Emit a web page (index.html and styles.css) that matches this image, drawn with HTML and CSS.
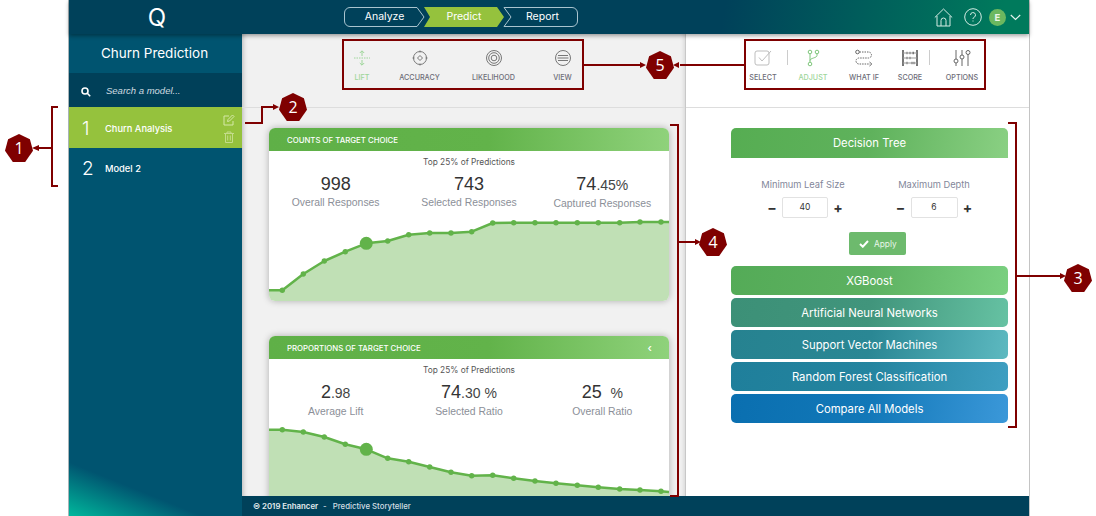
FILE: index.html
```html
<!DOCTYPE html>
<html lang="en">
<head>
    <meta charset="UTF-8">
    <title>Churn Prediction - Predict</title>
    <link rel="stylesheet" href="styles.css">
</head>
<body>
    <div class="app">
        <header class="topbar">
            <div class="logo">Q</div>
            <nav class="steps">
                <svg class="steps-bg" width="234" height="20" viewBox="0 0 234 20">
                    <path d="M6 .5H73L80 10 73 19.5H6A5.5 5.5 0 0 1 .5 14V6A5.5 5.5 0 0 1 6 .5Z" fill="none" stroke="#a9c4cf"/>
                    <path d="M80 0H153L160 10 153 20H80L86 10Z" fill="#95c23d"/>
                    <path d="M160 .5H228A5.5 5.5 0 0 1 233.500 6V14A5.500 5.500 0 0 1 228 19.500H160L167 10Z" fill="none" stroke="#a9c4cf"/>
                </svg>
                <span class="step step-a">Analyze</span>
                <span class="step step-b">Predict</span>
                <span class="step step-c">Report</span>
            </nav>
            <div class="top-icons">
                <svg width="19" height="19" viewBox="0 0 19 19" fill="none" stroke="#d5ece4" stroke-width="1">
                    <path d="M.8 9.500 9.500 1 18.200 9.500M3 8V18H16V8M7 18V12.500A2.500 2.500 0 0 1 12 12.500V18"/>
                </svg>
                <svg class="help" width="18" height="18" viewBox="0 0 18 18" fill="none" stroke="#d5ece4" stroke-width="1">
                    <circle cx="9" cy="9" r="8.300"/>
                    <path d="M6.500 7A2.500 2.500 0 1 1 9.800 9.400C9.200 9.700 9 10 9 11"/>
                    <path d="M9 12.500V13.500"/>
                </svg>
                <span class="avatar">E</span>
                <svg width="11" height="7" viewBox="0 0 11 7" fill="none" stroke="#e4f3ee" stroke-width="1.200"><path d="M.8 1 5.500 5.500 10.200 1"/></svg>
            </div>
        </header>

        <aside class="sidebar">
            <h2 class="side-title">Churn Prediction</h2>
            <div class="side-search">
                <svg width="10" height="10" viewBox="0 0 10 10" fill="none" stroke="#fff" stroke-width="1.600"><circle cx="4" cy="4" r="3"/><path d="M6.300 6.300 9.200 9.200"/></svg>
                <span>Search a model...</span>
            </div>
            <div class="model active">
                <span class="model-num">1</span>
                <span class="model-name">Churn Analysis</span>
                <div class="model-actions">
                    <svg width="12" height="12" viewBox="0 0 12 12" fill="none" stroke="#d5e8a8" stroke-width="1"><path d="M10 7V11H1V2H6"/><path d="M4.500 7.500 5 5.500 9.500 1 11 2.500 6.500 7Z"/></svg>
                    <svg width="10" height="12" viewBox="0 0 10 12" fill="none" stroke="#c3dc8a" stroke-width="1"><path d="M0 2.500H10M3 2.500V1H7V2.500M1.500 2.500V11.500H8.500V2.500M3.700 4.500V9.500M6.300 4.500V9.500"/></svg>
                </div>
            </div>
            <div class="model">
                <span class="model-num">2</span>
                <span class="model-name">Model 2</span>
            </div>
        </aside>

        <main class="main">
            <div class="panels">
                <section class="panel panel-left">
                    <div class="toolbar toolbar-left">
                        <div class="tool on">
                            <svg width="18" height="18" viewBox="0 0 18 18" fill="none" stroke="#9ed69a" stroke-width="1">
                                <path d="M1 9H17" stroke-dasharray="1.500 1"/>
                                <path d="M9 7V2M6.800 4 9 1.800 11.200 4M9 11V16M6.800 14 9 16.200 11.200 14"/>
                            </svg>
                            <span>Lift</span>
                        </div>
                        <div class="tool">
                            <svg width="18" height="18" viewBox="0 0 18 18" fill="none" stroke="#777" stroke-width="1">
                                <circle cx="9" cy="9" r="6.500"/>
                                <path d="M9 6.500 11.500 9 9 11.500 6.500 9ZM9 1.500V3.500M9 14.500V16.500M1.500 9H3.500M14.500 9H16.500"/>
                            </svg>
                            <span>Accuracy</span>
                        </div>
                        <div class="tool">
                            <svg width="18" height="18" viewBox="0 0 18 18" fill="none" stroke="#777" stroke-width="1">
                                <circle cx="9" cy="9" r="7.500"/><circle cx="9" cy="9" r="5.300"/><circle cx="9" cy="9" r="2.800"/>
                            </svg>
                            <span>Likelihood</span>
                        </div>
                        <div class="tool">
                            <svg width="18" height="18" viewBox="0 0 18 18" fill="none" stroke="#777" stroke-width="1">
                                <circle cx="9" cy="9" r="7.500"/><path d="M4 6.500H14M3.500 9H14.500M4 11.500H14" stroke-width="1.200"/>
                            </svg>
                            <span>View</span>
                        </div>
                    </div>
                    <div class="cards">
                        <article class="card">
                            <div class="card-head"><span>Counts of Target Choice</span></div>
                            <p class="card-sub">Top 25% of Predictions</p>
                            <div class="stats">
                                <div class="stat"><b>998</b><span>Overall Responses</span></div>
                                <div class="stat"><b>743</b><span>Selected Responses</span></div>
                                <div class="stat"><b>74<small>.45%</small></b><span>Captured Responses</span></div>
                            </div>
                            <svg class="chart" width="400" height="86" viewBox="0 0 400 86">
                                <path class="area" d="M0 75.300 13.300 75.300 34.300 59 55.300 46 76.300 36.700 97.300 28.300 118.700 26 139.700 19.700 160.700 18 182 18 202.700 16.700 223.700 8 244.700 7.700 400 7V86H0Z"/>
                                <polyline class="line" points="0,75.300 13.300,75.300 34.300,59 55.300,46 76.300,36.700 97.300,28.300 118.700,26 139.700,19.700 160.700,18 182,18 202.700,16.700 223.700,8 244.700,7.700 266,7.700 287,7.700 308.300,7.700 329.300,7.700 350.700,7.700 371,7 392,7 400,7"/>
                                <g class="dots">
                                    <circle cx="13.300" cy="75.300" r="2.700"/><circle cx="34.300" cy="59" r="2.700"/><circle cx="55.300" cy="46" r="2.700"/><circle cx="76.300" cy="36.700" r="2.700"/>
                                    <circle cx="97.300" cy="28.300" r="6.500"/>
                                    <circle cx="118.700" cy="26" r="2.700"/><circle cx="139.700" cy="19.700" r="2.700"/><circle cx="160.700" cy="18" r="2.700"/><circle cx="182" cy="18" r="2.700"/><circle cx="202.700" cy="16.700" r="2.700"/><circle cx="223.700" cy="8" r="2.700"/><circle cx="244.700" cy="7.700" r="2.700"/><circle cx="266" cy="7.700" r="2.700"/><circle cx="287" cy="7.700" r="2.700"/><circle cx="308.300" cy="7.700" r="2.700"/><circle cx="329.300" cy="7.700" r="2.700"/><circle cx="350.700" cy="7.700" r="2.700"/><circle cx="371" cy="7" r="2.700"/><circle cx="392" cy="7" r="2.700"/>
                                </g>
                            </svg>
                        </article>
                        <article class="card">
                            <div class="card-head"><span>Proportions of Target Choice</span><i>‹</i></div>
                            <p class="card-sub">Top 25% of Predictions</p>
                            <div class="stats">
                                <div class="stat"><b>2<small>.98</small></b><span>Average Lift</span></div>
                                <div class="stat"><b>74<small>.30 %</small></b><span>Selected Ratio</span></div>
                                <div class="stat"><b>25 <small>&nbsp;%</small></b><span>Overall Ratio</span></div>
                            </div>
                            <svg class="chart" width="400" height="86" viewBox="0 0 400 86">
                                <path class="area" d="M0 6.700 13.300 6.700 34.300 9 55.300 14 76.300 21.300 97.300 26.300 118.700 35.300 139.700 38.700 160.700 44 182 49.300 202.700 52.700 223.700 52.300 244.700 55.300 266 58 287 60.300 308.300 62.300 329.300 64.300 350.700 66 371 67 392 68.300 400 69V86H0Z"/>
                                <polyline class="line" points="0,6.700 13.300,6.700 34.300,9 55.300,14 76.300,21.300 97.300,26.300 118.700,35.300 139.700,38.700 160.700,44 182,49.300 202.700,52.700 223.700,52.300 244.700,55.300 266,58 287,60.300 308.300,62.300 329.300,64.300 350.700,66 371,67 392,68.300 400,69"/>
                                <g class="dots">
                                    <circle cx="13.300" cy="6.700" r="2.700"/><circle cx="34.300" cy="9" r="2.700"/><circle cx="55.300" cy="14" r="2.700"/><circle cx="76.300" cy="21.300" r="2.700"/>
                                    <circle cx="97.300" cy="26.300" r="6.500"/>
                                    <circle cx="118.700" cy="35.300" r="2.700"/><circle cx="139.700" cy="38.700" r="2.700"/><circle cx="160.700" cy="44" r="2.700"/><circle cx="182" cy="49.300" r="2.700"/><circle cx="202.700" cy="52.700" r="2.700"/><circle cx="223.700" cy="52.300" r="2.700"/><circle cx="244.700" cy="55.300" r="2.700"/><circle cx="266" cy="58" r="2.700"/><circle cx="287" cy="60.300" r="2.700"/><circle cx="308.300" cy="62.300" r="2.700"/><circle cx="329.300" cy="64.300" r="2.700"/><circle cx="350.700" cy="66" r="2.700"/><circle cx="371" cy="67" r="2.700"/><circle cx="392" cy="68.300" r="2.700"/>
                                </g>
                            </svg>
                        </article>
                    </div>
                </section>

                <section class="panel panel-right">
                    <div class="toolbar toolbar-right">
                        <div class="tool sep">
                            <svg width="18" height="18" viewBox="0 0 18 18" fill="none" stroke="#bdbdbd" stroke-width="1">
                                <rect x="1" y="2" width="14" height="14" rx="2"/><path d="M5 8.500 8 12 17 2"/>
                            </svg>
                            <span>Select</span>
                        </div>
                        <div class="tool on">
                            <svg width="18" height="18" viewBox="0 0 18 18" fill="none" stroke="#7ec67a" stroke-width="1">
                                <circle cx="6" cy="3" r="1.800"/><circle cx="13" cy="3" r="1.800"/><circle cx="6" cy="15" r="1.800"/>
                                <path d="M6 4.800V13.200M13 4.800V6.500C13 9 6 9 6 11.500"/>
                            </svg>
                            <span>Adjust</span>
                        </div>
                        <div class="tool">
                            <svg width="18" height="18" viewBox="0 0 18 18" fill="none" stroke="#666" stroke-width="1">
                                <circle cx="2.500" cy="3" r="1.800"/>
                                <path d="M4.500 3H13.500A2.500 2.500 0 0 1 13.500 9H4A2.800 2.800 0 0 0 4 15H15" stroke-dasharray="1.500 1"/>
                                <path d="M14.500 13 16.800 15 14.500 17"/>
                            </svg>
                            <span>What if</span>
                        </div>
                        <div class="tool sep">
                            <svg width="18" height="18" viewBox="0 0 18 18" fill="none" stroke="#777" stroke-width="1">
                                <path d="M2 1V17M16 1V17" stroke-width="2"/>
                                <path d="M2 4H16M2 9H16M2 14H16" stroke="#999"/>
                                <path d="M5.500 4H6.500M8.500 4H9.500M11.500 4H13M5.500 9H6.500M8.500 9H9.500M5.500 14H6.500M10.500 14H11.500M12.500 14H13.500" stroke-width="2.400"/>
                            </svg>
                            <span>Score</span>
                        </div>
                        <div class="tool">
                            <svg width="18" height="18" viewBox="0 0 18 18" fill="none" stroke="#666" stroke-width="1">
                                <path d="M3 1V10M3 14V17M9 1V6M9 10V17M15 1V1.500M15 5.500V17"/>
                                <circle cx="3" cy="12" r="2"/><circle cx="9" cy="8" r="2"/><circle cx="15" cy="3.500" r="2"/>
                            </svg>
                            <span>Options</span>
                        </div>
                    </div>
                    <div class="algos">
                        <div class="algo-open">Decision Tree</div>
                        <div class="params">
                            <div class="param param-leaf">
                                <label>Minimum Leaf Size</label>
                                <div class="stepper"><b>−</b><span class="num num-leaf">40</span><b>+</b></div>
                            </div>
                            <div class="param param-depth">
                                <label>Maximum Depth</label>
                                <div class="stepper"><b>−</b><span class="num">6</span><b>+</b></div>
                            </div>
                        </div>
                        <div class="apply-row">
                            <button class="apply">
                                <svg width="10" height="8" viewBox="0 0 10 8" fill="none" stroke="#fff" stroke-width="2"><path d="M1 4 3.800 6.700 9 1"/></svg>
                                Apply
                            </button>
                        </div>
                        <div class="algo algo-xg">XGBoost</div>
                        <div class="algo algo-ann">Artificial Neural Networks</div>
                        <div class="algo algo-svm">Support Vector Machines</div>
                        <div class="algo algo-rf">Random Forest Classification</div>
                        <div class="algo algo-all">Compare All Models</div>
                    </div>
                </section>
            </div>
            <footer class="footer"><b>© 2019 Enhancer</b><span class="dash">-</span><span>Predictive Storyteller</span></footer>
        </main>
    </div>

    <!-- callouts over the screenshot -->
    <svg class="marks" width="1096" height="516" viewBox="0 0 1096 516" fill="none" stroke="#7f0000" stroke-width="2">
        <rect x="343" y="40" width="240" height="49"/>
        <rect x="745" y="40" width="240" height="49"/>
        <path d="M583 65H640M744 65H680"/>
        <path d="M58 107H52V186H58M52 148H36"/>
        <path d="M245 123H262V107H277"/>
        <path d="M1008 123H1016V427H1008M1016 276H1063"/>
        <path d="M670 125H678V496H670M678 242H698"/>
        <g fill="#7f0000" stroke="none">
            <path d="M640 62 646 65 640 68ZM679 62 673 65 679 68Z"/>
            <path d="M39 145 32 148 39 151Z"/>
            <path d="M273 104 279 107 273 110Z"/>
            <path d="M1060 273 1066 276 1060 279Z"/>
            <path d="M695 239 701 242 695 245Z"/>
        </g>
    </svg>
    <span class="badge badge-1">1</span>
    <span class="badge badge-2">2</span>
    <span class="badge badge-3">3</span>
    <span class="badge badge-4">4</span>
    <span class="badge badge-5">5</span>
</body>
</html>
```

FILE: styles.css
```css
* {
    box-sizing: border-box;
}
body {
    margin: 0;
    background-color: #fff;
    font-family: Inter, "Open Sans", sans-serif;
    color: #333;
    overflow: hidden;
}
.app {
    display: grid;
    grid-template-columns: 173px 1fr;
    grid-template-rows: 34px 482px;
    width: 961px;
    height: 516px;
    margin-left: 69px;
    border-right: 1px solid #c4c4c4;
    box-shadow: -1px 0 0 #a8b4b8;
}

/* top bar */
.topbar {
    grid-column: 1 / 3;
    position: relative;
    z-index: 2;
    display: flex;
    align-items: center;
    background: linear-gradient(100deg, #00415a 0, #00415a 68%, #007a5c 97%);
    box-shadow: 0 2px 4px rgba(0, 0, 0, 0.35);
}
.logo {
    width: 173px;
    padding-left: 3px;
    text-align: center;
    color: #fff;
    font-size: 24px;
    font-weight: 400;
}
.steps {
    position: relative;
    display: flex;
    width: 234px;
    height: 20px;
    margin-left: 102px;
    color: #fff;
    font-size: 10.5px;
    line-height: 20px;
    text-align: center;
}
.steps-bg {
    position: absolute;
    left: 0;
    top: 0;
}
.step {
    position: relative;
}
.step-a {
    width: 80px;
    padding-left: 1px;
}
.step-b {
    width: 80px;
}
.step-c {
    width: 74px;
    padding-left: 3px;
}
.top-icons {
    display: flex;
    align-items: center;
    margin-left: auto;
    padding-right: 8px;
}
.help {
    margin-left: 11px;
}
.avatar {
    width: 17px;
    height: 17px;
    margin: 0 4px 0 7px;
    border-radius: 50%;
    background-color: #6cb85f;
    color: #eaf6e6;
    font-size: 9.500px;
    font-weight: 700;
    line-height: 17px;
    text-align: center;
}

/* left sidebar */
.sidebar {
    background: linear-gradient(22deg, #00b89c 0, #005470 50px);
    color: #fff;
}
.side-title {
    height: 39px;
    margin: 0;
    padding-right: 2px;
    font-size: 13.500px;
    font-weight: 400;
    line-height: 38px;
    text-align: center;
}
.side-search {
    display: flex;
    align-items: center;
    height: 34px;
    padding-left: 12px;
    background-color: #004059;
    color: #cfdbe0;
    font-family: "Liberation Sans", sans-serif;
    font-size: 9.500px;
    font-style: italic;
}
.side-search svg {
    margin-top: 3px;
}
.side-search span {
    margin-left: 15px;
}
.model {
    display: flex;
    align-items: center;
    height: 40px;
    padding-left: 12px;
}
.model.active {
    height: 41px;
    padding-top: 1px;
    background-color: #95c23d;
}
.model-num {
    width: 24px;
    padding-left: 1px;
    font-size: 19px;
    font-weight: 300;
}
.model-name {
    font-size: 9.300px;
    font-weight: 500;
}
.model-actions {
    display: flex;
    flex-direction: column;
    align-items: center;
    gap: 5px;
    margin-left: auto;
    padding: 1px 7px 0 0;
}

/* main area */
.main {
    display: flex;
    flex-direction: column;
    min-height: 0;
}
.panels {
    flex: 1;
    display: flex;
    min-height: 0;
}
.panel {
    overflow: hidden;
}
.panel-left {
    width: 444px;
    background-color: #f1f1f1;
    border-right: 1px solid #c8c8c8;
    box-shadow: inset 5px 0 5px -4px rgba(0, 0, 0, 0.25), inset -4px 0 4px -3px rgba(0, 0, 0, 0.12);
}
.panel-right {
    flex: 1;
    background-color: #fff;
}
.toolbar {
    display: grid;
    align-items: start;
    height: 74px;
    padding-top: 15px;
    border-bottom: 1px solid #ddd;
}
.toolbar-left {
    grid-template-columns: 58px 57px 91px 47px;
    padding-left: 91px;
}
.toolbar-right {
    grid-template-columns: 50px 50px 52px 40px 64px;
    padding-left: 52px;
}
.tool {
    position: relative;
    display: flex;
    flex-direction: column;
    align-items: center;
    color: #6d6d78;
    font-size: 7.200px;
    font-weight: 500;
    text-transform: uppercase;
}
.tool span {
    margin-top: 6px;
}
.tool.on {
    color: #9ed69a;
}
.tool.sep::after {
    content: "";
    position: absolute;
    right: 0;
    top: 1px;
    height: 15px;
    border-right: 1px solid #ccc;
}
.cards {
    padding: 20px 16px 0 27px;
}
.card {
    width: 400px;
    margin-bottom: 35px;
    overflow: hidden;
    background-color: #fff;
    border-radius: 6px;
    box-shadow: 0 0 7px rgba(0, 0, 0, 0.28);
}
.card-head {
    display: flex;
    align-items: center;
    justify-content: space-between;
    height: 23px;
    padding: 0 17px 0 18px;
    background: linear-gradient(90deg, #5fb047 0, #62b34a 55%, #8fd27b 100%);
    color: #fff;
    font-size: 7.800px;
    font-weight: 500;
    text-transform: uppercase;
}
.card-head i {
    font-size: 11px;
    font-style: normal;
}
.card-sub {
    height: 20px;
    margin: 0;
    color: #555;
    font-size: 8.300px;
    line-height: 22px;
    text-align: center;
}
.stats {
    display: grid;
    grid-template-columns: repeat(3, 1fr);
    height: 44px;
    padding-top: 1px;
    font-family: "Liberation Sans", sans-serif;
    text-align: center;
}
.stat b {
    display: block;
    color: #333;
    font-size: 18px;
    font-weight: 400;
    line-height: 24px;
}
.stat small {
    color: #444;
    font-size: 14px;
}
.stat span {
    display: block;
    color: #8b8f98;
    font-size: 10.400px;
    line-height: 14px;
}
.chart {
    display: block;
}
.area {
    fill: #c0e0b5;
}
.line {
    fill: none;
    stroke: #62b34a;
    stroke-width: 2.500;
    stroke-linejoin: round;
}
.dots {
    fill: #62b34a;
}

/* algorithm list */
.algos {
    width: 277px;
    margin: 20px 0 0 45px;
}
.algo-open,
.algo {
    color: #fff;
    font-size: 11.300px;
    text-align: center;
}
.algo-open {
    height: 30px;
    border-radius: 5px 5px 0 0;
    background: linear-gradient(100deg, #56ad52 0, #5fb25c 50%, #8ad083 100%);
    line-height: 31px;
}
.algo {
    height: 29px;
    margin-bottom: 3px;
    border-radius: 5px;
    line-height: 30px;
}
.algo-xg {
    background: linear-gradient(100deg, #54ab57 0, #5db161 50%, #7ad080 100%);
}
.algo-ann {
    background: linear-gradient(100deg, #3c9077 0, #41957c 50%, #66c2a3 100%);
}
.algo-svm {
    background: linear-gradient(100deg, #268290 0, #2a8794 50%, #5db9c0 100%);
}
.algo-rf {
    background: linear-gradient(100deg, #1f7f9b 0, #24849f 50%, #3f9fc2 100%);
}
.algo-all {
    background: linear-gradient(100deg, #0a6fb0 0, #1278b8 50%, #3b98d9 100%);
}
.params {
    display: flex;
    height: 74px;
    padding-top: 21px;
}
.param {
    display: flex;
    flex-direction: column;
    align-items: center;
    width: 110px;
}
.param-leaf {
    margin-left: 17px;
}
.param-leaf .stepper {
    margin-left: 4px;
}
.param-depth {
    margin-left: 21px;
}
.param label {
    margin-bottom: 7px;
    color: #83879a;
    font-size: 9.300px;
}
.stepper {
    display: flex;
    align-items: center;
    color: #333;
    font-size: 14px;
}
.stepper b {
    width: 20px;
    text-align: center;
}
.num {
    width: 47px;
    height: 21px;
    background-color: #fff;
    border: 1px solid #e2e2e2;
    border-radius: 2px;
    font-size: 8.500px;
    line-height: 19px;
    text-align: center;
}
.num-leaf {
    width: 46px;
}
.apply-row {
    height: 34px;
    padding-left: 118px;
}
.apply {
    display: flex;
    align-items: center;
    gap: 5px;
    width: 57px;
    height: 23px;
    padding: 0 0 0 10px;
    background-color: #6dba6d;
    border: none;
    border-radius: 2px;
    color: #e9f6e9;
    font-family: inherit;
    font-size: 8.300px;
}
.footer {
    display: flex;
    align-items: center;
    height: 20px;
    padding-left: 11px;
    background-color: #00415a;
    color: #d3dfe3;
    font-size: 7.800px;
    font-weight: 500;
}
.footer b {
    font-weight: 600;
    color: #e4ecef;
}
.dash {
    margin: 0 6px 0 5px;
}

/* callouts */
.marks {
    position: absolute;
    left: 0;
    top: 0;
}
.badge {
    position: absolute;
    width: 28px;
    height: 28px;
    background-color: #7f0000;
    clip-path: polygon(50% 0, 89% 19%, 100% 60%, 72% 100%, 28% 100%, 0 60%, 11% 19%);
    color: #fff;
    font-family: "Open Sans", sans-serif;
    font-size: 16px;
    line-height: 29px;
    text-align: center;
}
.badge-1 {
    left: 5px;
    top: 134px;
}
.badge-2 {
    left: 279px;
    top: 93px;
}
.badge-3 {
    left: 1064px;
    top: 264px;
}
.badge-4 {
    left: 699px;
    top: 228px;
}
.badge-5 {
    left: 646px;
    top: 51px;
}
```
